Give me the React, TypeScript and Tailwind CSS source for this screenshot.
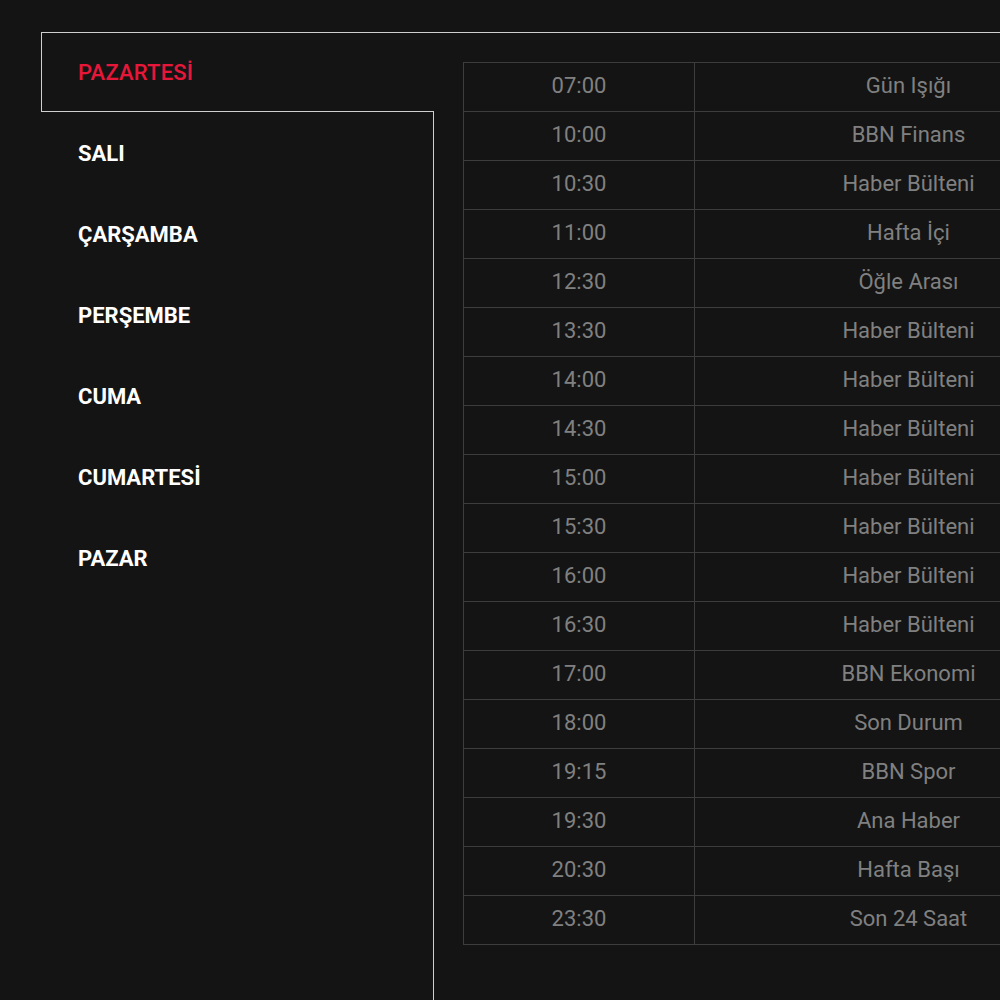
import React, { useState } from 'react';

const days = ['PAZARTESİ', 'SALI', 'ÇARŞAMBA', 'PERŞEMBE', 'CUMA', 'CUMARTESİ', 'PAZAR'];

const schedule = [
    ['07:00', 'Gün Işığı'],
    ['10:00', 'BBN Finans'],
    ['10:30', 'Haber Bülteni'],
    ['11:00', 'Hafta İçi'],
    ['12:30', 'Öğle Arası'],
    ['13:30', 'Haber Bülteni'],
    ['14:00', 'Haber Bülteni'],
    ['14:30', 'Haber Bülteni'],
    ['15:00', 'Haber Bülteni'],
    ['15:30', 'Haber Bülteni'],
    ['16:00', 'Haber Bülteni'],
    ['16:30', 'Haber Bülteni'],
    ['17:00', 'BBN Ekonomi'],
    ['18:00', 'Son Durum'],
    ['19:15', 'BBN Spor'],
    ['19:30', 'Ana Haber'],
    ['20:30', 'Hafta Başı'],
    ['23:30', 'Son 24 Saat'],
];

const App: React.FC = () => {
    const [active, setActive] = useState(0);

    return (
        <div className="w-[1000px] h-[1000px] overflow-hidden bg-[#141414] font-['Roboto',sans-serif]">
            <div className="flex pt-[32px] pl-[41px] w-[1400px]">
                {/* day tabs */}
                <ul className="w-[392px] shrink-0 relative z-10">
                    {days.map((day, i) => (
                        <li key={day}>
                            <button
                                onClick={() => setActive(i)}
                                className={
                                    i === active
                                        ? 'w-[393px] h-[80px] mb-px flex items-start pt-[23px] pl-[36px] text-[22px] font-medium text-[#e8173a] bg-[#141414] border border-r-0 border-[#cfcfcf] tracking-[0.2px]'
                                        : 'w-full h-[81px] flex items-start pt-[24px] pl-[37px] text-[22px] font-bold text-white'
                                }
                            >
                                {day}
                            </button>
                        </li>
                    ))}
                </ul>

                {/* schedule */}
                <div className="flex-1 min-h-[1000px] border-t border-l border-[#cfcfcf] pt-[29px] pl-[29px]">
                    <table className="w-[660px] border-collapse text-[22px] text-[#808080]">
                        <tbody>
                            {schedule.map(([time, show], i) => (
                                <tr key={i} className="h-[49px]">
                                    <td className="w-[231px] border border-[#3d3d3d] text-center p-0 pb-[3px]">{time}</td>
                                    <td className="border border-[#3d3d3d] text-center p-0 pb-[3px]">{show}</td>
                                </tr>
                            ))}
                        </tbody>
                    </table>
                </div>
            </div>
        </div>
    );
};

export default App;
